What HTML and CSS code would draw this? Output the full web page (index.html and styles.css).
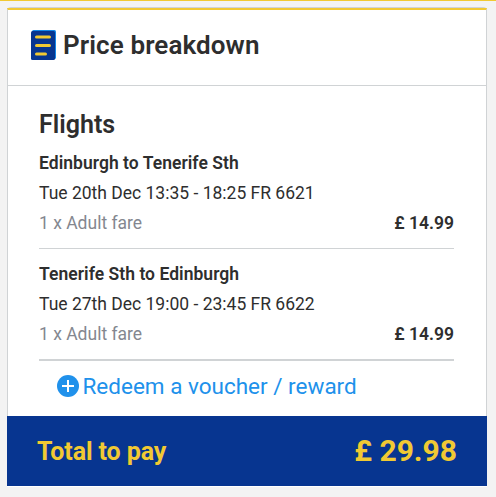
FILE: index.html
```
<!DOCTYPE html>
<html lang="en">
<head>
    <meta charset="utf-8">
    <title>Price breakdown</title>
    <link rel="stylesheet" href="styles.css">
</head>
<body>
    <div class="card">
        <div class="card-header">
            <svg class="receipt-icon" width="25" height="30" viewBox="0 0 25 30">
                <rect x="1" y="0" width="24" height="29" rx="1.5" fill="#1287e8"/>
                <rect x="0" y="1" width="24" height="29" rx="1.5" fill="#073590"/>
                <path d="M5.5 7h13M5.5 15.5h13M5.5 24h9" stroke="#f1c933" stroke-width="3" stroke-linecap="round"/>
            </svg>
            <h1>Price breakdown</h1>
        </div>

        <div class="card-body">
            <h2>Flights</h2>

            <div class="flight">
                <p class="route">Edinburgh to Tenerife Sth</p>
                <p class="time">Tue 20th Dec 13:35 - 18:25 FR 6621</p>
                <div class="fare">
                    <span class="fare-type">1 x Adult fare</span>
                    <span class="price">£ 14.99</span>
                </div>
            </div>

            <div class="flight last">
                <p class="route">Tenerife Sth to Edinburgh</p>
                <p class="time">Tue 27th Dec 19:00 - 23:45 FR 6622</p>
                <div class="fare">
                    <span class="fare-type">1 x Adult fare</span>
                    <span class="price">£ 14.99</span>
                </div>
            </div>

            <a class="redeem">
                <svg width="22" height="22" viewBox="0 0 22 22">
                    <circle cx="11" cy="11" r="11" fill="#2091eb"/>
                    <path d="M11 5v12M5 11h12" stroke="#fff" stroke-width="2"/>
                </svg>
                <span>Redeem a voucher / reward</span>
            </a>
        </div>

        <div class="total">
            <span class="total-label">Total to pay</span>
            <span class="total-price">£ 29.98</span>
        </div>
    </div>
</body>
</html>
```
FILE: styles.css
```
* {
    box-sizing: border-box;
}

body {
    margin: 0;
    height: 497px;
    padding: 6px 9px 0 7px;
    border-top: 1px solid #f1c933;
    background: #f3f3f3;
    font-family: Roboto, sans-serif;
    color: #2e2e2e;
    overflow: hidden;
}

h1, h2, p {
    margin: 0;
    white-space: nowrap;
}

.card {
    height: 480px;
    display: flex;
    flex-direction: column;
    background: #fff;
    border-top: 1px solid #d0d3d8;
    border-radius: 4px 4px 0 0;
}

.card-header {
    height: 78px;
    display: flex;
    align-items: center;
    padding: 0 23px 5px;
    border: 1px solid #d0d3d5;
    border-top: 2px solid #f1c933;
}

.receipt-icon {
    margin-right: 7px;
}

h1 {
    font-size: 26px;
    font-weight: 600;
    line-height: 30px;
    letter-spacing: 0.1px;
}

.card-body {
    height: 330px;
    padding: 23px 32px 0 31px;
    border: solid #d0d3d5;
    border-width: 0 1px;
}

h2 {
    font-size: 25px;
    font-weight: 600;
    line-height: 32px;
    margin-bottom: 7px;
}

.flight {
    height: 101px;
    border-bottom: 1px solid #d0d3d5;
    margin-bottom: 10px;
    font-size: 17.5px;
    line-height: 30px;
}

.last {
    height: 102px;
    border-bottom-width: 2px;
    margin-bottom: 11px;
}

.route, .price {
    font-weight: 600;
}

.route {
    letter-spacing: 0.04px;
}

.time {
    font-weight: 400;
}

.fare {
    display: flex;
    justify-content: space-between;
}

.fare-type {
    color: #84878f;
}

.redeem {
    display: flex;
    align-items: center;
    height: 28px;
    padding-left: 18px;
    color: #2091eb;
    font-size: 22.5px;
    white-space: nowrap;
}

.redeem svg {
    margin-right: 3.5px;
}

.total {
    height: 70px;
    display: flex;
    justify-content: space-between;
    align-items: center;
    padding: 0 30px 1px;
    background: #073590;
    color: #f1c933;
    font-weight: 700;
}

.total-label {
    padding-top: 1px;
    font-size: 25px;
    letter-spacing: -0.1px;
}

.total-price {
    font-size: 30px;
}
```
